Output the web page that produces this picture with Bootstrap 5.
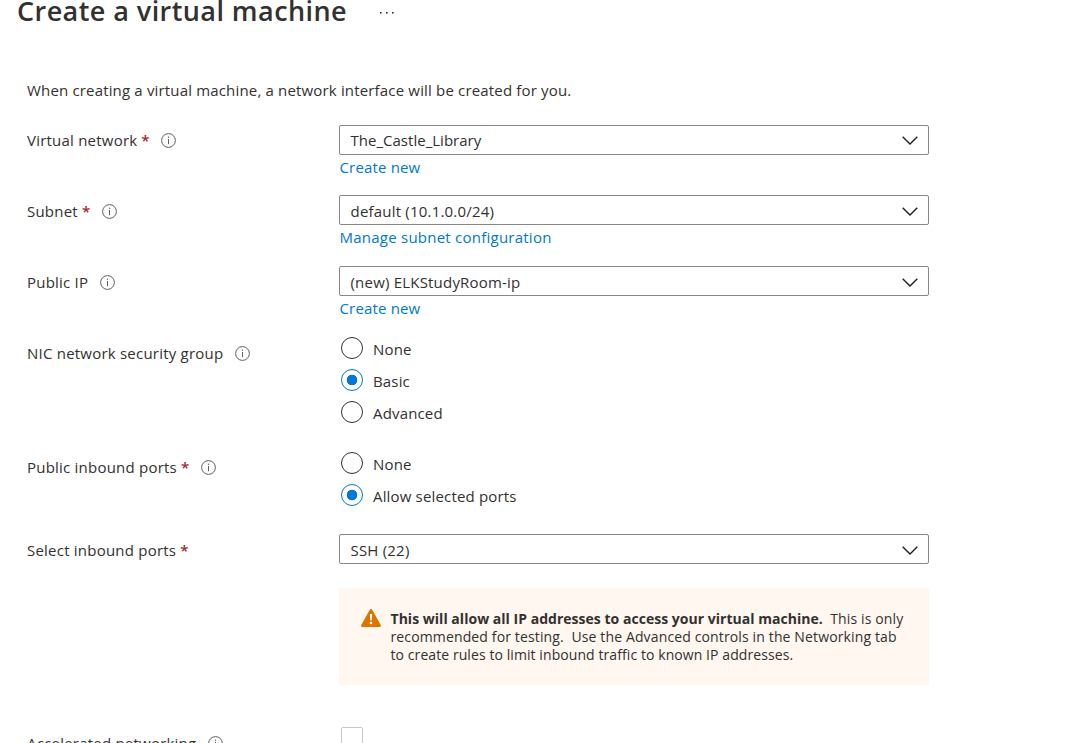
<!DOCTYPE html>
<html lang="en">
<head>
<meta charset="utf-8">
<title>Create a virtual machine</title>
<meta name="viewport" content="width=device-width, initial-scale=1">
<link href="https://cdn.jsdelivr.net/npm/bootstrap@5.3.0/dist/css/bootstrap.min.css" rel="stylesheet">
<style>
  body { font-family: "Open Sans", "Noto Sans", sans-serif; font-size: 15px; line-height: 20px; letter-spacing: .166px; color: #323130; height: 743px; overflow: hidden; }
  .blade-title { font-size: 27px; line-height: 36px; font-weight: 600; letter-spacing: .43px; margin: 0; padding-left: 17px; margin-top: -7px; }
  .blade-head { height: 29px; gap: 32px; }
  .blade-head svg { margin-top: 11px; }
  .intro { margin: 51px 0 0 27px; height: 45px; }
  .blade-form { padding-left: 27px; width: 929px; }
  .form-line { display: flex; }
  .field-label { width: 312px; flex: none; display: flex; align-items: center; height: 20px; margin-top: 6px; white-space: pre; letter-spacing: .22px; }
  .field-label.raised { margin-top: 5px; }
  .field-label svg { margin-left: 11.500px; flex: none; }
  .field-label .req { color: #a4262c; font-weight: 600; margin-left: 4px; }
  .field { width: 590px; flex: none; }
  .form-select.azure { height: 30px; padding: 1px 11px 0 10.500px; border: 1px solid #8a8886; border-radius: 2px; background: #fff; font-size: 15px; line-height: 27px; letter-spacing: .2px; color: #323130; display: flex; justify-content: space-between; align-items: center; }
  .form-select.azure span { padding-top: 1px; }
  .form-select.azure svg { margin-right: -1px; margin-top: 1px; }
  .form-select.first span { padding: 0; letter-spacing: .02px; margin-top: -1px; }
  .form-select.first svg { margin-top: 0; }
  .field a { display: inline-block; color: #0078d4; text-decoration: none; margin-top: 2px; margin-left: .5px; }
  .field a.long { letter-spacing: .24px; }
  .h70 { height: 70px; } .h71 { height: 71px; } .h115 { height: 115px; } .h82 { height: 82px; } .h54 { height: 54px; }
  .choice { display: flex; align-items: center; height: 22px; margin-bottom: 10px; padding-left: 2px; }
  .choice .form-check-input { width: 22px; height: 22px; margin: 0 10px 0 0; border: 1px solid #323130; flex: none; }
  .choice .form-check-input:checked { background: radial-gradient(circle, #0078d4 5px, #fff 5.6px); border-color: #0078d4; }
  .choice span { margin-top: 2px; }
  .notice { margin-left: 312px; width: 590px; height: 97px; background: #fff7f0; border-radius: 2px; padding: 22px 20px 0 22px; display: flex; font-size: 14px; line-height: 18px; letter-spacing: .08px; white-space: pre; }
  .notice b { letter-spacing: .025px; }
  .notice .wide { letter-spacing: .135px; }
  .notice svg { flex: none; margin-right: 9.500px; margin-top: -1px; }
  .square.form-check-input { width: 22px; height: 22px; margin: 0 0 0 2px; border: 1px solid #c8c6c4; border-radius: 2px; display: block; }
  .last-line { margin-top: 42px; }
</style>
</head>
<body class="bg-white">
<svg width="0" height="0" class="d-none">
  <symbol id="info" viewBox="0 0 15 15"><circle cx="7.5" cy="7.5" r="6.9" fill="none" stroke="#605e5c" stroke-width="1"/><path d="M7.5 6v5.2" stroke="#605e5c" stroke-width="1"/><circle cx="7.5" cy="4.2" r=".7" fill="#605e5c"/></symbol>
  <symbol id="chev" viewBox="0 0 16 9"><path d="M.7.8 8 8 15.300.8" fill="none" stroke="#201f1e" stroke-width="1.4"/></symbol>
</svg>
<header class="blade-head d-flex">
  <h1 class="blade-title">Create a virtual machine</h1>
  <svg width="16" height="4" viewBox="0 0 16 4"><g fill="#323130"><rect x="1" y="1" width="1.600" height="1.600"/><rect x="7" y="1" width="1.600" height="1.600"/><rect x="13" y="1" width="1.600" height="1.600"/></g></svg>
</header>
<p class="intro">When creating a virtual machine, a network interface will be created for you.</p>
<main class="blade-form">
  <div class="form-line h70">
    <label class="field-label raised"><span>Virtual network</span><span class="req">*</span><svg width="15" height="15"><use href="#info"/></svg></label>
    <div class="field"><div class="form-select azure first"><span>The_Castle_Library</span><svg width="16" height="9"><use href="#chev"/></svg></div><a href="#">Create new</a></div>
  </div>
  <div class="form-line h71">
    <label class="field-label"><span>Subnet</span><span class="req">*</span><svg width="15" height="15"><use href="#info"/></svg></label>
    <div class="field"><div class="form-select azure"><span>default (10.1.0.0/24)</span><svg width="16" height="9"><use href="#chev"/></svg></div><a href="#" class="long">Manage subnet configuration</a></div>
  </div>
  <div class="form-line h71">
    <label class="field-label"><span>Public IP</span><svg width="15" height="15"><use href="#info"/></svg></label>
    <div class="field"><div class="form-select azure"><span>(new) ELKStudyRoom-ip</span><svg width="16" height="9"><use href="#chev"/></svg></div><a href="#">Create new</a></div>
  </div>
  <div class="form-line h115">
    <label class="field-label"><span>NIC network security group</span><svg width="15" height="15"><use href="#info"/></svg></label>
    <div class="field">
      <label class="choice"><input class="form-check-input" type="radio" name="nsg"><span>None</span></label>
      <label class="choice"><input class="form-check-input" type="radio" name="nsg" checked><span>Basic</span></label>
      <label class="choice"><input class="form-check-input" type="radio" name="nsg"><span>Advanced</span></label>
    </div>
  </div>
  <div class="form-line h82">
    <label class="field-label raised"><span>Public inbound ports</span><span class="req">*</span><svg width="15" height="15"><use href="#info"/></svg></label>
    <div class="field">
      <label class="choice"><input class="form-check-input" type="radio" name="ports"><span>None</span></label>
      <label class="choice"><input class="form-check-input" type="radio" name="ports" checked><span>Allow selected ports</span></label>
    </div>
  </div>
  <div class="form-line h54">
    <label class="field-label"><span>Select inbound ports</span><span class="req">*</span></label>
    <div class="field"><div class="form-select azure"><span>SSH (22)</span><svg width="16" height="9"><use href="#chev"/></svg></div></div>
  </div>
  <div class="notice" role="alert">
    <svg width="20" height="18" viewBox="0 0 20 18"><path d="M8.600.9Q10-.9 11.400.9L19.700 16Q20.500 18 18.700 18H1.300Q-.5 18 .3 16Z" fill="#db7500"/><path d="M8.900 5h2.200l-.3 6.500H9.200Z" fill="#fff"/><circle cx="10" cy="14" r="1.300" fill="#fff"/></svg>
    <div><b>This will allow all IP addresses to access your virtual machine.</b>  <span class="wide">This is only</span><br><span class="wide">recommended for testing.  Use the Advanced controls in the Networking tab</span><br><span>to create rules to limit inbound traffic to known IP addresses.</span></div>
  </div>
  <div class="form-line last-line">
    <label class="field-label"><span>Accelerated networking</span><svg width="15" height="15"><use href="#info"/></svg></label>
    <div class="field"><input type="checkbox" class="form-check-input square"></div>
  </div>
</main>
<script src="https://cdn.jsdelivr.net/npm/bootstrap@5.3.0/dist/js/bootstrap.bundle.min.js"></script>
</body>
</html>
